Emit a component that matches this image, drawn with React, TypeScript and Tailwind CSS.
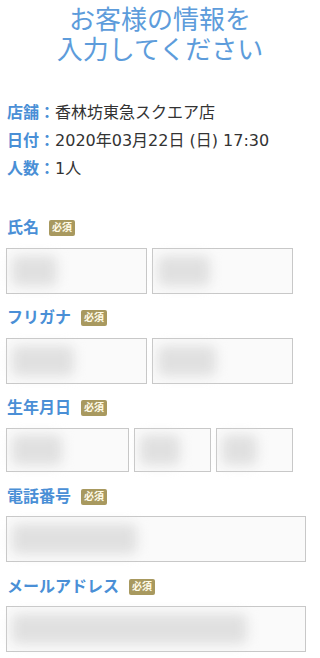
import React from 'react';

const font = { fontFamily: '"DejaVu Sans", "Noto Sans CJK JP", sans-serif' };

function Badge() {
  return (
    <span className="ml-[10px] inline-flex h-[16px] w-[26px] items-center justify-center rounded-[2px] bg-[#a8995f] text-[10px] font-bold leading-none text-[#fffbe8]">
      必須
    </span>
  );
}

function FieldLabel({ children }: { children: React.ReactNode }) {
  return (
    <div className="flex h-[20px] items-center pl-[7px]">
      <span className="text-[16px] font-bold leading-[20px] text-[#4a8fd6]">{children}</span>
      <Badge />
    </div>
  );
}

// blurred placeholder standing in for the masked input value
function Box({ w, h = 'h-[46px]', blob }: { w: string; h?: string; blob: string }) {
  return (
    <div className={`${w} ${h} flex items-center border border-[#c8c8c8] bg-[#fafafa] px-[5px]`}>
      <div className={`${blob} h-[30px] rounded-md bg-[#e0e0e0] blur-[6px]`}></div>
    </div>
  );
}

export default function App() {
  return (
    <div style={font} className="min-h-screen w-[320px] bg-white text-[#333]">
      {/* Title */}
      <h1 className="pt-[5px] text-center text-[26px] font-normal leading-[30px] text-[#5d9cdb]">
        <div>お客様の情報を</div>
        <div>入力してください</div>
      </h1>

      {/* Reservation summary */}
      <div className="mt-[34px] pl-[7px] text-[16px] leading-[28px]">
        <div>
          <span className="font-bold text-[#4a8fd6]">店舗：</span>香林坊東急スクエア店
        </div>
        <div>
          <span className="font-bold text-[#4a8fd6]">日付：</span>2020年03月22日 (日) 17:30
        </div>
        <div>
          <span className="font-bold text-[#4a8fd6]">人数：</span>1人
        </div>
      </div>

      {/* Form */}
      <div className="mt-[35px] flex flex-col">
        <FieldLabel>氏名</FieldLabel>
        <div className="mt-[10px] flex gap-[5px] pl-[6px]">
          <Box w="w-[141px]" blob="w-[45px]" />
          <Box w="w-[141px]" blob="w-[52px]" />
        </div>

        <div className="mt-[14px]">
          <FieldLabel>フリガナ</FieldLabel>
        </div>
        <div className="mt-[10px] flex gap-[5px] pl-[6px]">
          <Box w="w-[141px]" blob="w-[62px]" />
          <Box w="w-[141px]" blob="w-[58px]" />
        </div>

        <div className="mt-[14px]">
          <FieldLabel>生年月日</FieldLabel>
        </div>
        <div className="mt-[10px] flex gap-[5px] pl-[6px]">
          <Box w="w-[123px]" h="h-[44px]" blob="w-[50px]" />
          <Box w="w-[77px]" h="h-[44px]" blob="w-[40px]" />
          <Box w="w-[77px]" h="h-[44px]" blob="w-[35px]" />
        </div>

        <div className="mt-[15px]">
          <FieldLabel>電話番号</FieldLabel>
        </div>
        <div className="mt-[9px] pl-[6px]">
          <Box w="w-[300px]" blob="w-[125px]" />
        </div>

        <div className="mt-[15px]">
          <FieldLabel>メールアドレス</FieldLabel>
        </div>
        <div className="mt-[9px] pl-[6px]">
          <Box w="w-[300px]" blob="w-[235px]" />
        </div>
      </div>
    </div>
  );
}
